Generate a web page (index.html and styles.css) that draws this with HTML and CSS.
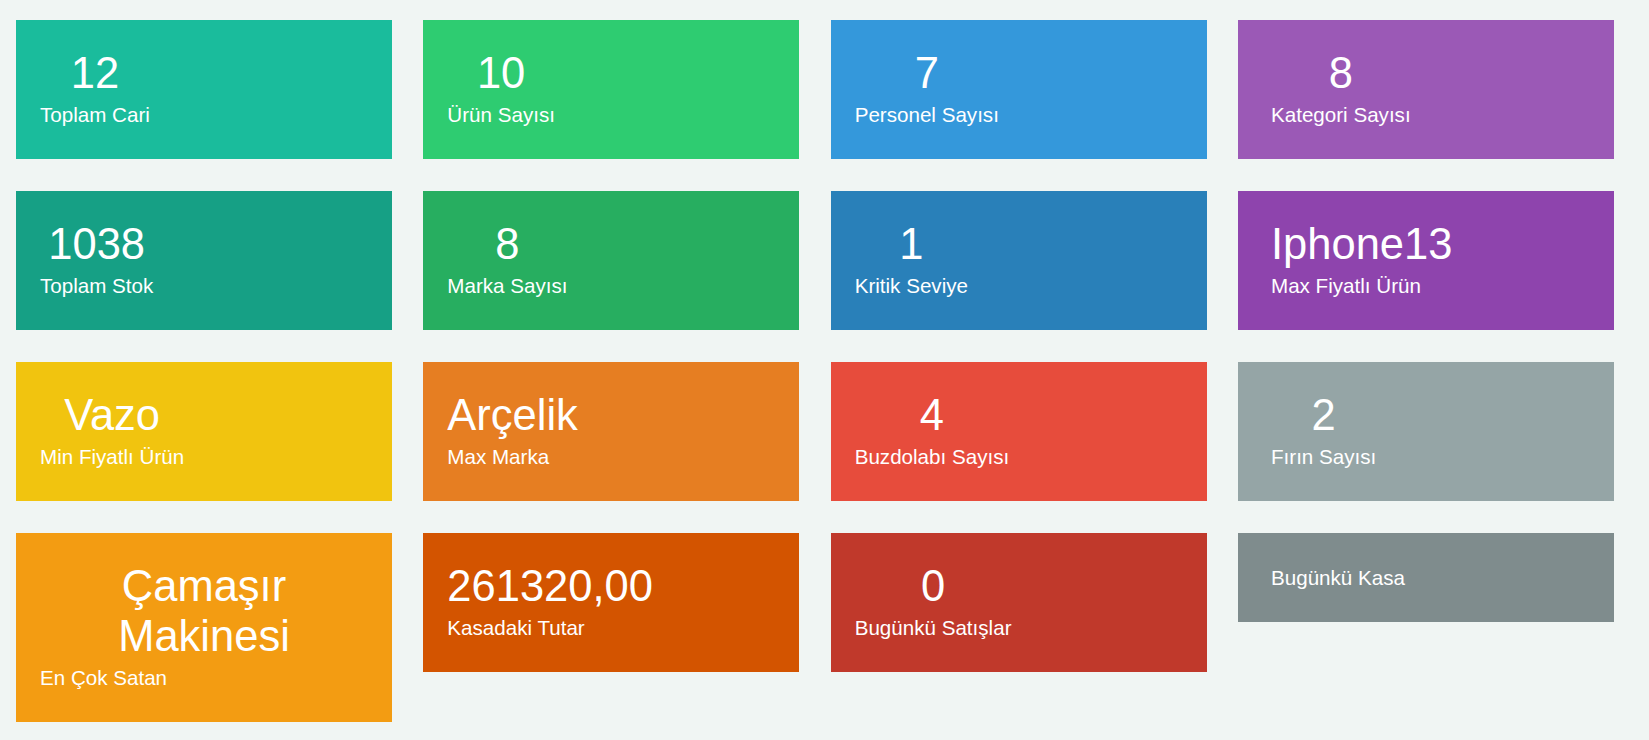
FILE: index.html
```html
<!DOCTYPE html>
<html lang="tr">
<head>
<meta charset="utf-8">
<title>Dashboard</title>
<link rel="stylesheet" href="styles.css">
</head>
<body>
<main class="dashboard">
  <div class="card c-turquoise"><div class="inner"><h3 class="num">12</h3><p class="label">Toplam Cari</p></div></div>
  <div class="card c-emerald"><div class="inner"><h3 class="num">10</h3><p class="label">Ürün Sayısı</p></div></div>
  <div class="card c-river"><div class="inner"><h3 class="num">7</h3><p class="label">Personel Sayısı</p></div></div>
  <div class="card c-amethyst"><div class="inner"><h3 class="num">8</h3><p class="label">Kategori Sayısı</p></div></div>

  <div class="card c-greensea"><div class="inner"><h3 class="num">1038</h3><p class="label">Toplam Stok</p></div></div>
  <div class="card c-nephritis"><div class="inner"><h3 class="num">8</h3><p class="label">Marka Sayısı</p></div></div>
  <div class="card c-belize"><div class="inner"><h3 class="num">1</h3><p class="label">Kritik Seviye</p></div></div>
  <div class="card c-wisteria"><div class="inner"><h3 class="num">Iphone13</h3><p class="label">Max Fiyatlı Ürün</p></div></div>

  <div class="card c-sunflower"><div class="inner"><h3 class="num">Vazo</h3><p class="label">Min Fiyatlı Ürün</p></div></div>
  <div class="card c-carrot"><div class="inner"><h3 class="num">Arçelik</h3><p class="label">Max Marka</p></div></div>
  <div class="card c-alizarin"><div class="inner"><h3 class="num">4</h3><p class="label">Buzdolabı Sayısı</p></div></div>
  <div class="card c-concrete"><div class="inner"><h3 class="num">2</h3><p class="label">Fırın Sayısı</p></div></div>

  <div class="card c-orange"><div class="inner"><h3 class="num">Çamaşır Makinesi</h3><p class="label">En Çok Satan</p></div></div>
  <div class="card c-pumpkin"><div class="inner"><h3 class="num">261320,00</h3><p class="label">Kasadaki Tutar</p></div></div>
  <div class="card c-pomegranate"><div class="inner"><h3 class="num">0</h3><p class="label">Bugünkü Satışlar</p></div></div>
  <div class="card c-asbestos"><div class="inner"><h3 class="num"></h3><p class="label">Bugünkü Kasa</p></div></div>
</main>
</body>
</html>
```

FILE: styles.css
```css
html, body {
  margin: 0;
  padding: 0;
  background: #f0f5f3;
  font-family: "Liberation Sans", Arial, sans-serif;
  color: #ffffff;
}

.dashboard {
  display: grid;
  grid-template-columns: repeat(4, 376px);
  column-gap: 31.33px;
  row-gap: 32px;
  align-items: start;
  padding: 20px 0 0 16px;
}

.card {
  padding: 28px 24px 27px 24px;
}

.card:nth-child(4n) {
  padding-left: 33px;
  padding-right: 15px;
}

.inner {
  display: inline-block;
  max-width: 100%;
  vertical-align: top;
}

.num {
  margin: 0;
  font-size: 43.5px;
  font-weight: normal;
  line-height: 50px;
  text-align: center;
}

.label {
  margin: 0;
  font-size: 20.6px;
  line-height: 34px;
  text-align: left;
}

.c-turquoise   { background: #1abc9c; }
.c-emerald     { background: #2ecc71; }
.c-river       { background: #3498db; }
.c-amethyst    { background: #9b59b6; }
.c-greensea    { background: #16a085; }
.c-nephritis   { background: #27ae60; }
.c-belize      { background: #2980b9; }
.c-wisteria    { background: #8e44ad; }
.c-sunflower   { background: #f1c40f; }
.c-carrot      { background: #e67e22; }
.c-alizarin    { background: #e74c3c; }
.c-concrete    { background: #95a5a6; }
.c-orange      { background: #f39c12; }
.c-pumpkin     { background: #d35400; }
.c-pomegranate { background: #c0392b; }
.c-asbestos    { background: #7f8c8d; }
```
